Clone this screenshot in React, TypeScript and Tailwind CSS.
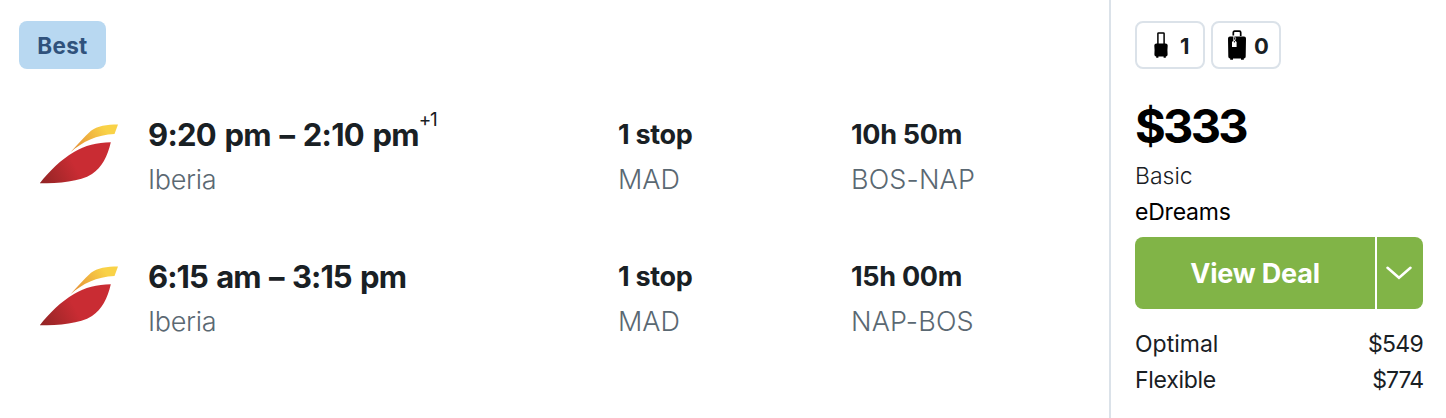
import React from "react";

function IberiaLogo({ id }: { id: string }) {
  return (
    <svg width="80" height="62" viewBox="0 0 80 62" className="-ml-px block" aria-label="Iberia">
      <defs>
        <linearGradient id={`${id}-red`} x1="0" y1="60" x2="70" y2="22" gradientUnits="userSpaceOnUse">
          <stop offset="0" stopColor="#8f2424" />
          <stop offset="0.5" stopColor="#c92c33" />
          <stop offset="1" stopColor="#c92c33" />
        </linearGradient>
        <linearGradient id={`${id}-gold`} x1="32" y1="28" x2="66" y2="6" gradientUnits="userSpaceOnUse">
          <stop offset="0" stopColor="#e38b36" />
          <stop offset="1" stopColor="#f9d247" />
        </linearGradient>
      </defs>
      <path d="M0.8 60.300C10 48.500 22 36.500 35 29C46 22.500 58 19.500 71.800 19.300C68.500 33.500 63 44.500 53 51C41 58.800 20 60.300 0.800 60.300Z" fill={`url(#${id}-red)`} />
      <path d="M31.500 29.200C38 22 45 14.300 52 7.800C58 3 68 1.500 79 1.500L75.500 11C58 11.600 43 19 31.500 29.200Z" fill={`url(#${id}-gold)`} />
    </svg>
  );
}

function CarryOnIcon() {
  return (
    <svg width="14" height="26" viewBox="0 0 14 26" className="block">
      <path d="M3.900 12V1.600Q3.900 0.900 4.600 0.900H9.400Q10.100 0.900 10.100 1.600V12" fill="none" stroke="#000" strokeWidth="1.500" />
      <path d="M2.500 11.500H11.500Q13.700 11.500 13.700 13.500Q13.200 18 13.600 22.500Q13.600 24.500 11.800 24.500V25.700H9.600V24.500H4.400V25.700H2.200V24.500Q0.400 24.500 0.400 22.500Q0.800 18 0.300 13.500Q0.300 11.500 2.500 11.500Z" fill="#000" />
    </svg>
  );
}

function CheckedBagIcon() {
  return (
    <svg width="18" height="30" viewBox="0 0 18 30" className="block">
      <path d="M5.300 5.600V2.500Q5.300 1.200 6.600 1.200H11.400Q12.700 1.200 12.700 2.500V6" fill="none" stroke="#000" strokeWidth="1.700" />
      <path d="M2 6.500H16Q18 6.500 18 8.500L17.700 26.400Q17.700 28.400 15.800 28.400V29.700H13V28.400H5V29.700H2.200V28.400Q0.300 28.400 0.300 26.400L0 8.500Q0 6.500 2 6.500Z" fill="#000" />
      <path d="M4 17V12L6.300 9.800L8.600 12V17Z" fill="#fff" />
      <path d="M5.700 6V10.500M6.600 6.600L7.600 8.500L6.600 10.500" stroke="#fff" strokeWidth="0.800" fill="none" />
      <circle cx="6.400" cy="11.700" r="0.700" fill="#000" />
    </svg>
  );
}

type Leg = {
  id: string;
  times: string;
  timesClass: string;
  nextDay?: string;
  duration: string;
  durationClass: string;
  route: string;
};

const legs: Leg[] = [
  {
    id: "out",
    times: "9:20 pm – 2:10 pm",
    timesClass: "tracking-[-0.75px] [word-spacing:2px]",
    nextDay: "+1",
    duration: "10h 50m",
    durationClass: "tracking-[-0.3px]",
    route: "BOS-NAP",
  },
  {
    id: "back",
    times: "6:15 am – 3:15 pm",
    timesClass: "tracking-[-0.95px] [word-spacing:2px]",
    duration: "15h 00m",
    durationClass: "tracking-[-0.3px]",
    route: "NAP-BOS",
  },
];

function LegRow({ leg }: { leg: Leg }) {
  return (
    <div className="flex h-[142px] items-start whitespace-nowrap">
      <div className="w-[108px] shrink-0 pt-[8px]">
        <IberiaLogo id={leg.id} />
      </div>
      <div className="w-[470px] shrink-0">
        <div className="flex h-[40px] items-start text-[31px] leading-[40px] font-[650] text-[#192024]">
          <span className={leg.timesClass}>{leg.times}</span>
          {leg.nextDay && <span className="text-[19px] leading-[9px] font-normal tracking-[-1.5px]">{leg.nextDay}</span>}
        </div>
        <div className="mt-[4px] text-[27px] leading-[41px] font-[350] tracking-[-0.3px] text-[#5a6872]">Iberia</div>
      </div>
      <div className="w-[233px] shrink-0">
        <div className="text-[27px] leading-[40px] font-[650] tracking-[-0.3px] text-[#192024]">1 stop</div>
        <div className="mt-[5px] text-[27px] leading-[40px] font-[350] text-[#5a6872]">MAD</div>
      </div>
      <div>
        <div className={`text-[27px] leading-[40px] font-[650] text-[#192024] ${leg.durationClass}`}>{leg.duration}</div>
        <div className="mt-[5px] text-[27px] leading-[40px] font-[350] tracking-[0.15px] text-[#5a6872]">{leg.route}</div>
      </div>
    </div>
  );
}

export default function App() {
  return (
    <div className="flex h-[418px] w-[1446px] overflow-hidden bg-white font-['Inter',sans-serif]">
      <main className="w-[1109px] shrink-0 pt-[21px]">
        <div className="ml-[19px] flex h-12 w-[87px] items-center justify-center rounded-lg bg-[#b8d8f1] pt-[2px] text-[22.500px] font-[650] tracking-[0.3px] text-[#30527c]">
          Best
        </div>
        <div className="pt-[46px] pl-[40px]">
          {legs.map((leg) => (
            <LegRow key={leg.id} leg={leg} />
          ))}
        </div>
      </main>
      <aside className="flex w-[337px] flex-col border-l-2 border-[#dbe2e9] pt-[21px] pr-[23px] pl-[24px] whitespace-nowrap">
        <div className="flex gap-[6px] text-[22px] font-bold text-[#192024]">
          <div className="flex h-12 w-[70px] items-center rounded-lg border-2 border-[#dbe2e9] pl-[17px]">
            <CarryOnIcon />
            <span className="ml-[12px] pt-[2px]">1</span>
          </div>
          <div className="flex h-12 w-[70px] items-center rounded-lg border-2 border-[#dbe2e9] pl-[15px]">
            <CheckedBagIcon />
            <span className="ml-[8px] pt-[2px]">0</span>
          </div>
        </div>
        <div className="mt-[26px] h-[63px] text-[47px] leading-[62px] font-bold tracking-[-2.7px] text-black">$333</div>
        <div className="text-[23px] leading-9 font-[350] text-[#192024]">Basic</div>
        <div className="text-[23px] leading-9 font-[380] tracking-[-0.2px] text-black">eDreams</div>
        <div className="mt-[7px] flex h-[72px] gap-[2px] text-white">
          <button className="w-[240px] rounded-l-lg bg-[#81b447] pt-[2px] text-[27px] font-[650] tracking-[-0.2px]">View Deal</button>
          <button className="flex w-[46px] items-center justify-center rounded-r-lg bg-[#81b447] pr-[2px]" aria-label="More deals">
            <svg width="26" height="14" viewBox="0 0 26 14" className="block" fill="none">
              <path d="M1.500 1.800L13 11.800L24.500 1.800" stroke="#fff" strokeWidth="2.500" strokeLinecap="round" />
            </svg>
          </button>
        </div>
        <div className="mt-[17px] text-[23px] leading-9 font-[380] text-[#192024]">
          <div className="flex justify-between">
            <span>Optimal</span>
            <span className="tracking-[-0.7px]">$549</span>
          </div>
          <div className="flex justify-between">
            <span className="tracking-[-0.3px]">Flexible</span>
            <span className="tracking-[-1px]">$774</span>
          </div>
        </div>
      </aside>
    </div>
  );
}
